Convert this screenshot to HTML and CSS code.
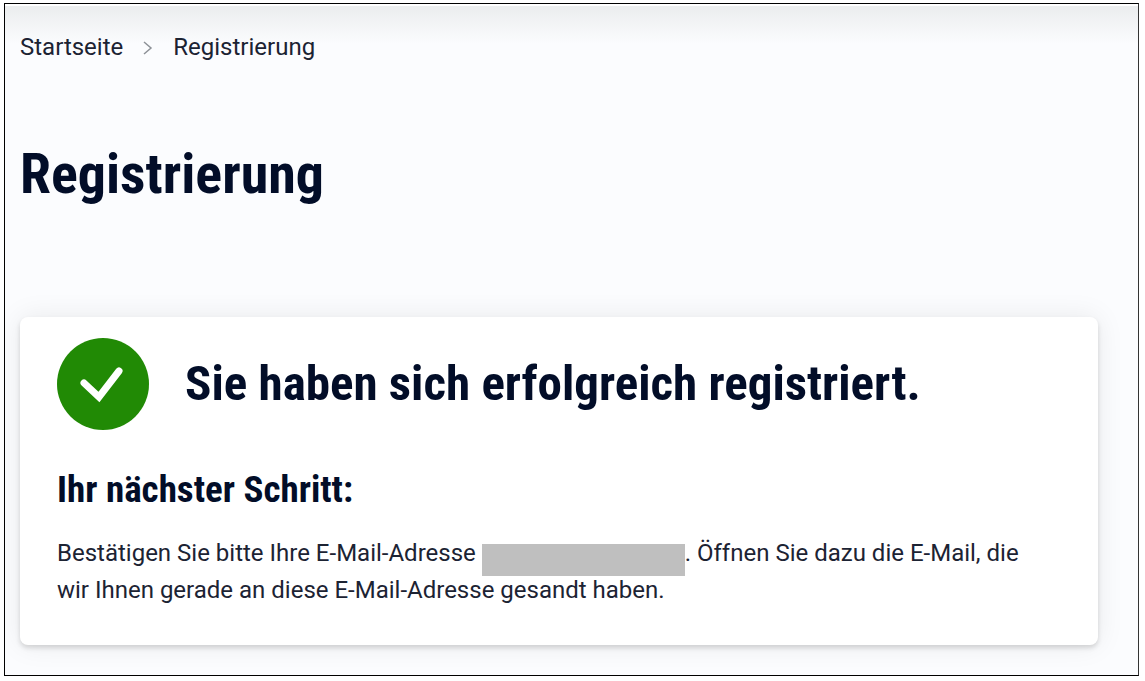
FILE: index.html
```html
<!DOCTYPE html>
<html lang="de">
  <head>
    <meta charset="UTF-8" />
    <meta name="viewport" content="width=device-width, initial-scale=1.0" />
    <title>Registrierung</title>
    <link rel="stylesheet" href="styles.css">
  </head>
  <body>
    <div class="page">
      <nav class="breadcrumb">
        <a href="#">Startseite</a>
        <svg class="chevron" viewBox="0 0 10 14" aria-hidden="true">
          <path d="M1 1l7 6-7 6" />
        </svg>
        <a href="#">Registrierung</a>
      </nav>
      <main>
        <h1>Registrierung</h1>
        <section class="card">
          <div class="card-header">
            <svg class="check" viewBox="0 0 92 92" aria-hidden="true">
              <circle cx="46" cy="46" r="46" />
              <path d="M27 45l15 14 20-26" />
            </svg>
            <h2>Sie haben sich erfolgreich registriert.</h2>
          </div>
          <h3>Ihr nächster Schritt:</h3>
          <p>
            Bestätigen Sie bitte Ihre E-Mail-Adresse
            <span class="redacted"></span>. Öffnen Sie dazu die E-Mail, die
            wir Ihnen gerade an diese E-Mail-Adresse gesandt haben.
          </p>
        </section>
      </main>
    </div>
  </body>
</html>
```

FILE: styles.css
```css
* {
  box-sizing: border-box;
}
body {
  margin: 0;
  padding: 3px 6px 5px 4px;
  background-color: #fff;
  color: #1c2333;
  font-family: Roboto, sans-serif;
  font-size: 24px;
  line-height: 37px;
}
.page {
  min-height: calc(100vh - 8px);
  padding: 25px 40px 26px 15px;
  border: 1px solid #000;
  border-right-color: #333;
  background: linear-gradient(#fff 2px, #ebedee 2px, #fbfcfe 40px);
}
.breadcrumb {
  display: flex;
  align-items: center;
  gap: 20px;
}
.breadcrumb a {
  color: inherit;
  text-decoration: none;
}
.chevron {
  width: 10px;
  height: 14px;
  fill: none;
  stroke: #8d9197;
  stroke-width: 1.5;
}
h1,
h2,
h3 {
  margin: 0;
  color: #020d28;
  font-family: "Roboto Condensed", Roboto, sans-serif;
  font-weight: 700;
}
h1 {
  margin-top: 72px;
  font-size: 56px;
  line-height: 72px;
}
.card {
  margin-top: 107px;
  padding: 21px 48px 36px 37px;
  border-radius: 8px;
  background-color: #fff;
  box-shadow: 0 3px 5px rgba(0, 0, 0, 0.14), 0 0 28px rgba(0, 0, 0, 0.08);
}
.card-header {
  display: flex;
  align-items: center;
  gap: 36px;
}
.check {
  flex: none;
  width: 92px;
  height: 92px;
}
.check circle {
  fill: #218a05;
}
.check path {
  fill: none;
  stroke: #fff;
  stroke-width: 7;
  stroke-linecap: round;
}
h2 {
  font-size: 49px;
  line-height: 56px;
}
h3 {
  margin-top: 38px;
  font-size: 37px;
  line-height: 44px;
}
p {
  margin: 23px 0 0;
}
.redacted {
  display: inline-block;
  width: 203px;
  height: 32px;
  margin-bottom: -4px;
  background-color: #bfbfbf;
  vertical-align: bottom;
}
```
